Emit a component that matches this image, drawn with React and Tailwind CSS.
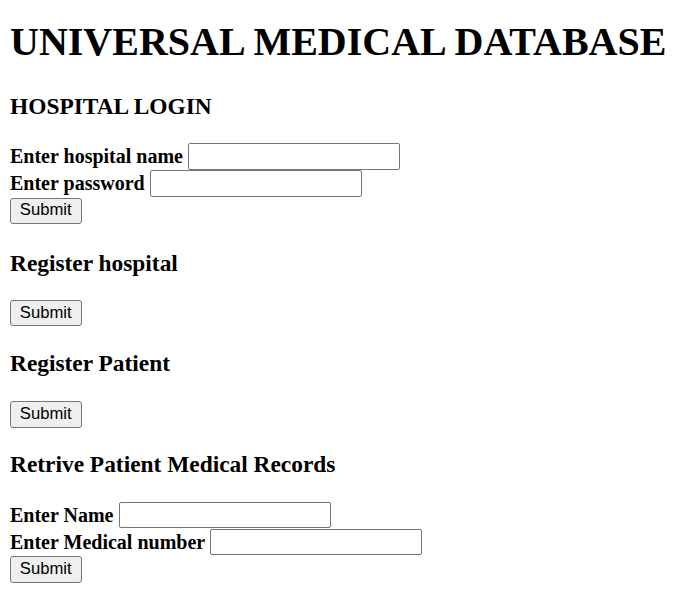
export default function App() {
  // plain page, everything at the 1.25x look of the screenshot
  const inputCls =
    "w-[212px] h-[26.5px] rounded-[2px] border-[1.25px] border-[#767676] bg-white px-[2.5px] text-[16.67px] outline-none";
  const buttonCls =
    "w-[71.5px] h-[26.5px] rounded-[3px] border-[1.25px] border-[#767676] bg-[#efefef] text-[16.67px] text-black font-['Liberation_Sans',Arial,sans-serif] leading-none";

  return (
    <div className="min-h-screen bg-white px-[10px] pt-[19px] text-black font-['Liberation_Serif','Times_New_Roman',serif]">
      <h1 className="text-[40px] font-bold leading-[46px] whitespace-nowrap">UNIVERSAL MEDICAL DATABASE</h1>

      {/* login */}
      <h3 className="mt-[28px] text-[23.4px] font-bold leading-[27px]">HOSPITAL LOGIN</h3>
      <div className="mt-[23px] flex flex-col">
        <div className="flex h-[27px] items-center gap-[5px]">
          <label className="text-[20px] font-bold leading-[23px]">Enter hospital name</label>
          <input type="text" className={inputCls} />
        </div>
        <div className="flex h-[27px] items-center gap-[5px]">
          <label className="text-[20px] font-bold leading-[23px]">Enter password</label>
          <input type="password" className={inputCls} />
        </div>
        <div className="flex h-[27.5px] items-end pb-[0.5px]">
          <button type="submit" className={buttonCls}>Submit</button>
        </div>
      </div>

      {/* register hospital */}
      <h3 className="mt-[25px] text-[23.4px] font-bold leading-[27px]">Register hospital</h3>
      <div className="mt-[23px] flex h-[27px] items-center">
        <button type="submit" className={buttonCls}>Submit</button>
      </div>

      {/* register patient */}
      <h3 className="mt-[23.4px] text-[23.4px] font-bold leading-[27px]">Register Patient</h3>
      <div className="mt-[24px] flex h-[27px] items-center">
        <button type="submit" className={buttonCls}>Submit</button>
      </div>

      {/* records */}
      <h3 className="mt-[22.8px] text-[23.4px] font-bold leading-[27px]">Retrive Patient Medical Records</h3>
      <div className="mt-[24px] flex flex-col">
        <div className="flex h-[27px] items-center gap-[5px]">
          <label className="text-[20px] font-bold leading-[23px]">Enter Name</label>
          <input type="text" className={inputCls} />
        </div>
        <div className="flex h-[27px] items-center gap-[5px]">
          <label className="text-[20px] font-bold leading-[23px]">Enter Medical number</label>
          <input type="text" className={inputCls} />
        </div>
        <div className="flex h-[27.5px] items-end pb-[0.5px]">
          <button type="submit" className={buttonCls}>Submit</button>
        </div>
      </div>
    </div>
  );
}
